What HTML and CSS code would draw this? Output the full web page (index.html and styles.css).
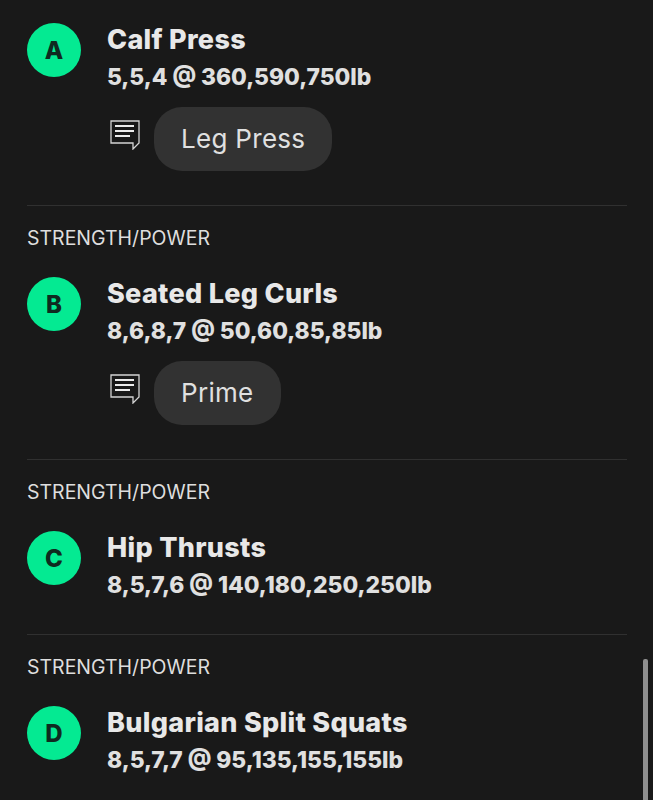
FILE: index.html
```html
<!DOCTYPE html>
<html lang="en">
<head>
  <meta charset="UTF-8">
  <title>Workout</title>
  <meta name="viewport" content="width=device-width, initial-scale=1.0">
  <link rel="stylesheet" href="styles.css">
</head>
<body>
<svg width="0" height="0" class="defs">
  <symbol id="note" viewBox="0 0 30 30">
    <path d="M1 1H29V23L23 29V23H1Z" fill="none" stroke="#d4d4d4" stroke-width="1.3"/>
    <path d="M5 6H24M5 11H24M5 16H20" fill="none" stroke="#ececec" stroke-width="2.2"/>
  </symbol>
</svg>
<div class="list">
  <section class="item first">
    <div class="row">
      <div class="badge">A</div>
      <div class="info">
        <h2>Calf Press</h2>
        <p class="sets">5,5,4 @ 360,590,750lb</p>
        <div class="note">
          <svg class="note-icon"><use href="#note"/></svg>
          <span class="pill">Leg Press</span>
        </div>
      </div>
    </div>
  </section>
  <section class="item">
    <div class="label">STRENGTH/POWER</div>
    <div class="row">
      <div class="badge">B</div>
      <div class="info">
        <h2>Seated Leg Curls</h2>
        <p class="sets">8,6,8,7 @ 50,60,85,85lb</p>
        <div class="note">
          <svg class="note-icon"><use href="#note"/></svg>
          <span class="pill">Prime</span>
        </div>
      </div>
    </div>
  </section>
  <section class="item">
    <div class="label">STRENGTH/POWER</div>
    <div class="row">
      <div class="badge">C</div>
      <div class="info">
        <h2>Hip Thrusts</h2>
        <p class="sets">8,5,7,6 @ 140,180,250,250lb</p>
      </div>
    </div>
  </section>
  <section class="item last">
    <div class="label">STRENGTH/POWER</div>
    <div class="row">
      <div class="badge">D</div>
      <div class="info">
        <h2>Bulgarian Split Squats</h2>
        <p class="sets">8,5,7,7 @ 95,135,155,155lb</p>
      </div>
    </div>
  </section>
</div>
<div class="scrollbar"></div>
</body>
</html>
```

FILE: styles.css
```css
html, body {
  margin: 0;
  height: 800px;
  overflow: hidden;
}
body {
  background: #191919;
  font-family: 'Inter', sans-serif;
  color: #e8e8e8;
  position: relative;
}
.defs {
  position: absolute;
}
.list {
  padding: 0 26px 0 27px;
}
.item {
  border-bottom: 1px solid #303030;
  padding: 20px 0 32px;
}
.item.first {
  padding-top: 23px;
}
.item.last {
  border-bottom: none;
}
.label {
  font-size: 19.5px;
  line-height: 24px;
  color: #dedede;
  margin-bottom: 27px;
}
.row {
  display: flex;
  gap: 26px;
}
.badge {
  width: 54px;
  height: 54px;
  border-radius: 50%;
  background: #04ea92;
  color: #0f2a20;
  font-size: 24px;
  font-weight: 800;
  display: flex;
  align-items: center;
  justify-content: center;
  flex-shrink: 0;
}
.info h2 {
  margin: 0;
  font-size: 27px;
  line-height: 34px;
  font-weight: 800;
  letter-spacing: 0.3px;
  color: #e8e8e8;
}
.sets {
  margin: 3px 0 0;
  font-size: 22.8px;
  line-height: 34px;
  font-weight: 800;
  color: #e0e0e0;
}
.note {
  display: flex;
  align-items: flex-start;
  gap: 14px;
  margin: 13px 0 2px 3px;
}
.note-icon {
  width: 30px;
  height: 30px;
  margin-top: 13px;
}
.pill {
  background: #323232;
  border-radius: 28px;
  height: 64px;
  line-height: 64px;
  padding: 0 27px;
  font-size: 26px;
  letter-spacing: 0.3px;
  color: #e0e0e0;
}
.scrollbar {
  position: absolute;
  right: 5px;
  top: 659px;
  width: 5px;
  height: 141px;
  background: #8f8f8f;
  border-radius: 2px 2px 0 0;
}
```
